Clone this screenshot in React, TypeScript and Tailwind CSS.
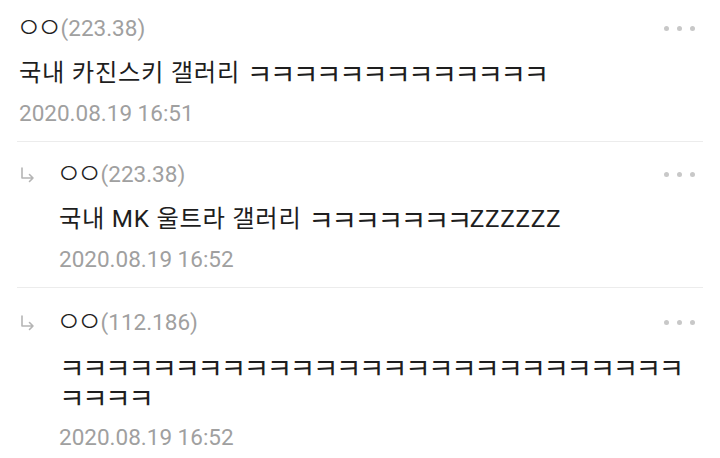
import React from "react";

const font = { fontFamily: 'Roboto, "Noto Sans CJK KR", sans-serif' };

function Dots() {
  return (
    <div className="flex items-center gap-[8px] pr-[8px]">
      <span className="block w-[5px] h-[5px] rounded-full bg-[#c8c8c8]" />
      <span className="block w-[5px] h-[5px] rounded-full bg-[#c8c8c8]" />
      <span className="block w-[5px] h-[5px] rounded-full bg-[#c8c8c8]" />
    </div>
  );
}

function Arrow() {
  return (
    <svg width="16" height="16" viewBox="0 0 16 16" className="mt-[1px]">
      <path
        d="M3 1 V11 H14 M10.5 7.5 L14 11 L10.5 14.5"
        fill="none"
        stroke="#b5b5b5"
        strokeWidth="1.6"
        strokeLinecap="round"
        strokeLinejoin="round"
      />
    </svg>
  );
}

function Rich({ text }: { text: string }) {
  const parts = text.split(/(ㅋ+)/).filter((p) => p.length > 0);
  return (
    <>
      {parts.map((p, i) =>
        p[0] === "ㅋ" ? (
          <span key={i} className="text-[28px] tracking-[-2.7px] leading-[0] relative top-[4px]">
            {p}
          </span>
        ) : (
          <span key={i}>{p}</span>
        )
      )}
    </>
  );
}

type C = { name: string; ip: string; text: string; date: string; reply?: boolean; pt: string };

function Comment({ c, last }: { c: C; last?: boolean }) {
  return (
    <div className={`flex ${c.pt} pb-[13px] ${last ? "" : "border-b border-[#ececec]"}`}>
      {c.reply && (
        <div className="w-[42px] shrink-0 pl-[2px] h-[30px] flex items-center">
          <Arrow />
        </div>
      )}
      <div className={`flex-1 min-w-0 ${c.reply ? "" : "pl-[2px]"}`}>
        <div className="flex items-center justify-between h-[30px]">
          <div className="leading-[30px] whitespace-nowrap">
            <span className="text-[#1e1e1e] text-[28px] tracking-[-5px] font-light leading-[0] relative top-[2px] -left-[3px]">
              {c.name}
            </span>
            <span className="text-[#a0a0a0]">({c.ip})</span>
          </div>
          <Dots />
        </div>
        <div className="mt-[15px] leading-[30px] text-[24.3px] tracking-[0.7px] text-[#1e1e1e] pr-[20px] break-all">
          <Rich text={c.text} />
        </div>
        <div className="mt-[10px] leading-[30px] text-[#a0a0a0]">{c.date}</div>
      </div>
    </div>
  );
}

export default function App() {
  const comments: C[] = [
    {
      name: "ㅇㅇ",
      ip: "223.38",
      text: "국내 카진스키 갤러리 ㅋㅋㅋㅋㅋㅋㅋㅋㅋㅋㅋㅋㅋ",
      date: "2020.08.19 16:51",
      pt: "pt-[13px]",
    },
    {
      name: "ㅇㅇ",
      ip: "223.38",
      text: "국내 MK 울트라 갤러리 ㅋㅋㅋㅋㅋㅋㅋZZZZZZ",
      date: "2020.08.19 16:52",
      reply: true,
      pt: "pt-[17px]",
    },
    {
      name: "ㅇㅇ",
      ip: "112.186",
      text: "ㅋㅋㅋㅋㅋㅋㅋㅋㅋㅋㅋㅋㅋㅋㅋㅋㅋㅋㅋㅋㅋㅋㅋㅋㅋㅋㅋㅋㅋㅋㅋ",
      date: "2020.08.19 16:52",
      reply: true,
      pt: "pt-[19px]",
    },
  ];
  return (
    <div className="w-[720px] h-[458px] bg-white overflow-hidden px-[17px] text-[22.5px]" style={font}>
      {comments.map((c, i) => (
        <Comment key={i} c={c} last={i === comments.length - 1} />
      ))}
    </div>
  );
}
